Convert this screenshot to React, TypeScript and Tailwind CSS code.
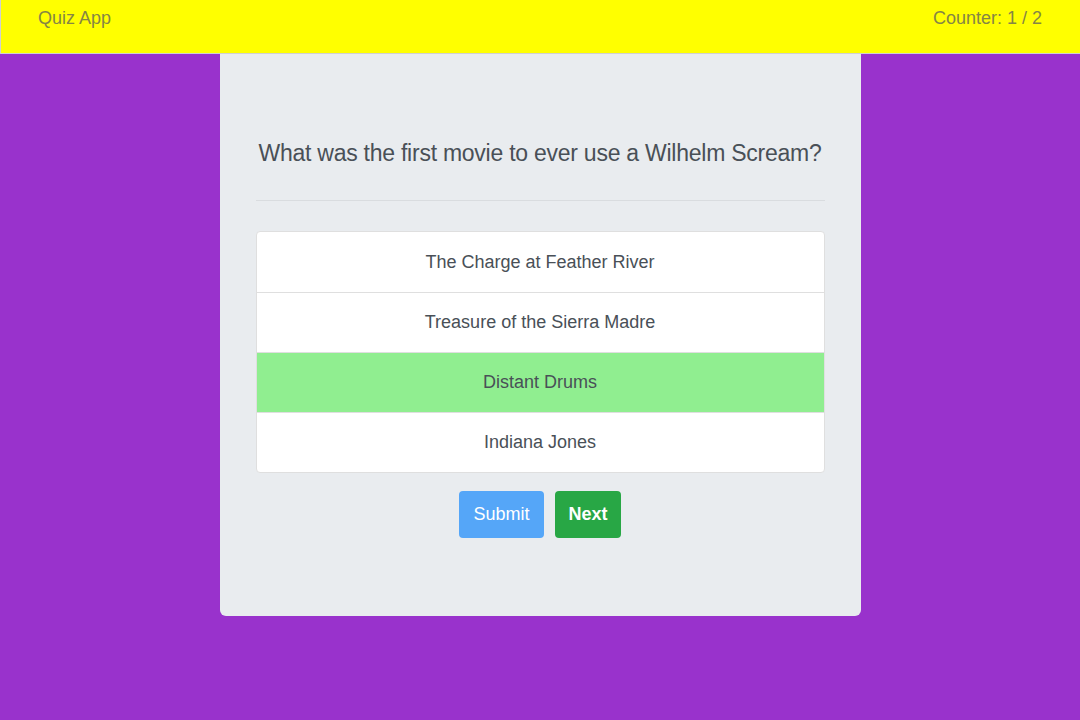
export default function App() {
  const answers = [
    "The Charge at Feather River",
    "Treasure of the Sierra Madre",
    "Distant Drums",
    "Indiana Jones",
  ];
  const selected = 2;

  return (
    <div
      className="min-h-[720px] bg-[#9932cc]"
      style={{ fontFamily: '"Liberation Sans", Arial, sans-serif' }}
    >
      <nav className="flex h-[54px] items-start justify-between border-b border-l border-[#d0d0d0] bg-[#ffff00] pl-[37px] pr-[38px] pt-[5px] text-[18px] text-[#858545]">
        <span>Quiz App</span>
        <span>Counter: 1 / 2</span>
      </nav>
      <div className="mx-auto w-[641px] rounded-b-md bg-[#e9ecef] px-[36px] pb-[78px] pt-[83px]">
        <h2 className="-mx-[20px] whitespace-nowrap text-center text-[23px] leading-[32px] tracking-[-0.25px] text-[#495057]">
          What was the first movie to ever use a Wilhelm Scream?
        </h2>
        <hr className="mt-[31px] border-t border-[#d9dcdf]" />
        <ul className="mt-[30px] overflow-hidden rounded-[4px] border border-[#dfdfdf] bg-white">
          {answers.map((a, i) => (
            <li
              key={a}
              className={
                "flex h-[60px] items-center justify-center text-[18px] text-[#495057] " +
                (i > 0 ? "border-t border-[#dfdfdf] " : "") +
                (i === selected ? "bg-[#90ee90]" : "")
              }
            >
              {a}
            </li>
          ))}
        </ul>
        <div className="mt-[18px] flex justify-center gap-[11px]">
          <button className="h-[47px] w-[85px] rounded-[4px] bg-[#55a6f8] text-[18px] text-white">
            Submit
          </button>
          <button className="h-[47px] w-[66px] rounded-[4px] bg-[#28a745] text-[18px] font-bold text-white">
            Next
          </button>
        </div>
      </div>
    </div>
  );
}
